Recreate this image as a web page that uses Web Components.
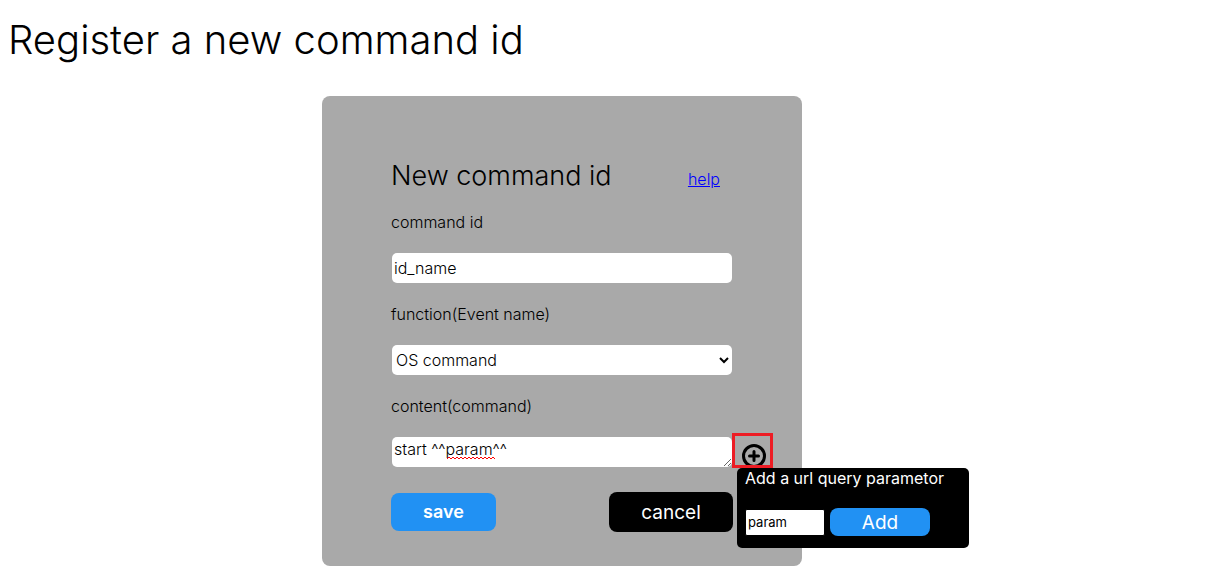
<!DOCTYPE html>
<html lang="en">
<head>
<meta charset="utf-8">
<title>Register a new command id</title>
<style>
  body { margin: 0; background: #fff; color: #000; font: 350 16px/20px Inter, sans-serif; }
</style>
</head>
<body>
<command-page>
  <command-card>
    <form-field slot="fields" kind="text" label="command id" value="id_name"></form-field>
    <form-field slot="fields" kind="select" label="function(Event name)" value="OS command"></form-field>
    <form-field slot="fields" kind="area" label="content(command)" value="start ^^param^^">
      <param-adder slot="tool"></param-adder>
    </form-field>
    <action-button slot="actions" tone="save">save</action-button>
    <action-button slot="actions" tone="cancel">cancel</action-button>
  </command-card>
</command-page>

<script>
class CommandPage extends HTMLElement {
  constructor() {
    super();
    this.attachShadow({ mode: 'open' }).innerHTML = `
      <style>
        :host { display: block; padding: 16px 8px 8px; }
        h1 { margin: 0 0 32px; font-size: 40px; line-height: 48px; font-weight: inherit; }
        main { display: flex; justify-content: center; padding-right: 97px; }
      </style>
      <h1>Register a new command id</h1>
      <main><slot></slot></main>`;
  }
}

class CommandCard extends HTMLElement {
  constructor() {
    super();
    this.attachShadow({ mode: 'open' }).innerHTML = `
      <style>
        :host { display: block; box-sizing: border-box; width: 480px; max-width: 100%;
                padding: 62px 69px 34px; background: #a9a9a9; border-radius: 8px; }
        header { display: flex; justify-content: space-between; align-items: baseline;
                 padding-right: 13px; margin-bottom: 18px; }
        h2 { margin: 0; font-size: 27px; line-height: 36px; font-weight: inherit; }
        a { color: #00f; }
        .fields { display: flex; flex-direction: column; gap: 21px; }
        .actions { display: flex; justify-content: space-between; align-items: center; margin-top: 25px; }
      </style>
      <header><h2>New command id</h2><a href="#help">help</a></header>
      <div class="fields"><slot name="fields"></slot></div>
      <div class="actions"><slot name="actions"></slot></div>`;
  }
}

class FormField extends HTMLElement {
  connectedCallback() {
    if (this.shadowRoot) return;
    const value = this.getAttribute('value');
    const control = {
      text: `<input id="c" type="text" value="${value}">`,
      select: `<select id="c"><option>${value}</option></select>`,
      area: `<textarea id="c" rows="1" spellcheck="false">${value}</textarea>
        <svg class="wave" width="48" height="4" aria-hidden="true">
          <defs><pattern id="w" width="4" height="4" patternUnits="userSpaceOnUse">
            <path d="M0 3L2 1L4 3" fill="none" stroke="#f00"/></pattern></defs>
          <rect width="48" height="4" fill="url(#w)"/></svg>`
    }[this.getAttribute('kind')];
    this.attachShadow({ mode: 'open' }).innerHTML = `
      <style>
        :host { display: block; }
        label { display: block; margin-bottom: 21px; }
        .row { position: relative; margin: 0 1px; }
        input, select, textarea { display: block; box-sizing: border-box; width: 100%; height: 30px;
          margin: 0; padding: 0 2px; border: 0; border-radius: 5px; background: #fff; color: #000;
          font: inherit; outline: 0; }
        select { padding: 0; }
        textarea { padding: 2px; overflow: hidden; resize: both; }
        .wave { position: absolute; left: 55px; top: 19px; }
      </style>
      <label for="c">${this.getAttribute('label')}</label>
      <div class="row">${control}<slot name="tool"></slot></div>`;
  }
}

class ActionButton extends HTMLElement {
  constructor() {
    super();
    this.attachShadow({ mode: 'open' }).innerHTML = `
      <style>
        :host { display: block; width: 105px; --bg: #2191f3; --h: 38px; --weight: 600; --size: 18px; --lift: 2px; }
        :host([tone="cancel"]) { width: 124px; --bg: #000; --h: 40px; --weight: 400; --size: 19px; --lift: 0; }
        :host([tone="add"]) { width: 100px; --h: 28px; --weight: 400; --size: 19px; --lift: 0; }
        button { display: block; width: 100%; height: var(--h); padding: 0 0 var(--lift); border: 0;
          border-radius: 8px; background: var(--bg); color: #fff; font-family: inherit;
          font-size: var(--size); font-weight: var(--weight); }
      </style>
      <button type="button"><slot></slot></button>`;
  }
}

class ParamAdder extends HTMLElement {
  constructor() {
    super();
    this.attachShadow({ mode: 'open' }).innerHTML = `
      <style>
        :host { position: absolute; left: 100%; top: -4px; display: block; }
        .open { display: block; box-sizing: border-box; width: 41px; height: 35px; padding: 7px 0 0 6px;
          border: 3px solid #ed1c24; background: none; overflow: hidden; }
        svg { display: block; }
        .menu { position: absolute; left: 5px; top: 35px; box-sizing: border-box; width: 232px;
          height: 80px; padding: 0 8px 12px; border-radius: 5px; background: #000; color: #fff;
          font-weight: 400; }
        label { display: block; white-space: nowrap; margin-bottom: 20px; }
        .row { display: flex; align-items: center; gap: 5px; }
        input { box-sizing: border-box; width: 80px; height: 27px; margin: 0; padding: 1px 2px;
          border: 1px solid #000; border-radius: 2px; background: #fff; color: #000;
          font: 400 13px Inter, sans-serif; }
      </style>
      <button class="open" type="button" aria-label="Add parameter">
        <svg width="26" height="26" viewBox="0 0 26 26" fill="none" stroke="#000" stroke-width="3">
          <circle cx="13" cy="13" r="10.5"/><path d="M13 8.5v9M8.5 13h9" stroke-linecap="round"/></svg>
      </button>
      <div class="menu">
        <label for="p">Add a url query parametor</label>
        <div class="row"><input id="p" type="text" value="param"><action-button tone="add">Add</action-button></div>
      </div>`;
  }
}

customElements.define('command-page', CommandPage);
customElements.define('command-card', CommandCard);
customElements.define('form-field', FormField);
customElements.define('action-button', ActionButton);
customElements.define('param-adder', ParamAdder);
</script>
</body>
</html>
